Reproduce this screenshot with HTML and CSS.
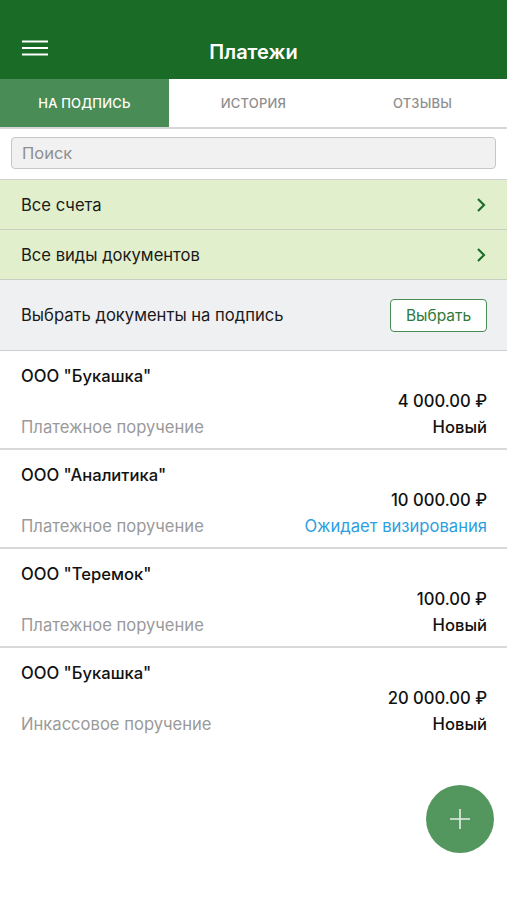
FILE: index.html
```html
<!DOCTYPE html>
<html lang="ru">
<head>
  <meta charset="UTF-8">
  <meta name="viewport" content="width=device-width, initial-scale=1.0">
  <title>Платежи</title>
  <link rel="stylesheet" href="styles.css">
</head>
<body>
  <div id="app">
    <header class="topbar">
      <button class="menu-btn" aria-label="Меню">
        <svg width="26" height="16" viewBox="0 0 26 16">
          <path d="M0 1.5H26M0 8H26M0 14.5H26" stroke="#fff" stroke-width="2.2" fill="none"/>
        </svg>
      </button>
      <h1 class="title">Платежи</h1>
    </header>

    <nav class="tabs">
      <div class="tab active">На подпись</div>
      <div class="tab">История</div>
      <div class="tab">Отзывы</div>
    </nav>

    <div class="search-wrap">
      <input class="search" type="text" placeholder="Поиск">
    </div>

    <div class="filter">
      <span>Все счета</span>
      <svg class="chevron" width="10" height="16" viewBox="0 0 10 16">
        <path d="M2 2L8 8L2 14" stroke="#1f6e2b" stroke-width="2.2" fill="none"/>
      </svg>
    </div>
    <div class="filter">
      <span>Все виды документов</span>
      <svg class="chevron" width="10" height="16" viewBox="0 0 10 16">
        <path d="M2 2L8 8L2 14" stroke="#1f6e2b" stroke-width="2.2" fill="none"/>
      </svg>
    </div>

    <div class="select-row">
      <span>Выбрать документы на подпись</span>
      <button class="select-btn">Выбрать</button>
    </div>

    <ul class="docs">
      <li class="doc">
        <div class="doc-name">ООО "Букашка"</div>
        <div class="doc-amount">4 000.00 ₽</div>
        <div class="doc-bottom">
          <span class="doc-type">Платежное поручение</span>
          <span class="doc-status">Новый</span>
        </div>
      </li>
      <li class="doc">
        <div class="doc-name">ООО "Аналитика"</div>
        <div class="doc-amount">10 000.00 ₽</div>
        <div class="doc-bottom">
          <span class="doc-type">Платежное поручение</span>
          <span class="doc-status waiting">Ожидает визирования</span>
        </div>
      </li>
      <li class="doc">
        <div class="doc-name">ООО "Теремок"</div>
        <div class="doc-amount">100.00 ₽</div>
        <div class="doc-bottom">
          <span class="doc-type">Платежное поручение</span>
          <span class="doc-status">Новый</span>
        </div>
      </li>
      <li class="doc last">
        <div class="doc-name">ООО "Букашка"</div>
        <div class="doc-amount">20 000.00 ₽</div>
        <div class="doc-bottom">
          <span class="doc-type">Инкассовое поручение</span>
          <span class="doc-status">Новый</span>
        </div>
      </li>
    </ul>

    <button class="fab" aria-label="Добавить">
      <svg width="20" height="20" viewBox="0 0 20 20">
        <path d="M10 0V20M0 10H20" stroke="#e6f0e7" stroke-width="1.6" fill="none"/>
      </svg>
    </button>
  </div>
</body>
</html>
```

FILE: styles.css
```css
body {
  margin: 0;
  font-family: Inter, "Noto Sans", Arial, sans-serif;
  background-color: #fff;
  color: #111;
}

#app {
  position: relative;
  width: 507px;
  height: 900px;
  overflow: hidden;
}

/* Header */
.topbar {
  height: 79px;
  background-color: #1a6b25;
  display: flex;
  align-items: flex-end;
  box-sizing: border-box;
  padding: 0 0 18px 22px;
  position: relative;
}

.menu-btn {
  background: none;
  border: none;
  padding: 0;
  width: 26px;
  height: 16px;
  margin-bottom: 5px;
}

.menu-btn svg {
  display: block;
}

.title {
  position: absolute;
  left: 0;
  right: 0;
  bottom: 15px;
  margin: 0;
  text-align: center;
  color: #fff;
  font-size: 20px;
  font-weight: 600;
  pointer-events: none;
}

/* Tabs */
.tabs {
  display: flex;
  height: 48px;
  border-bottom: 2px solid #d6d6d6;
}

.tab {
  flex: 1;
  display: flex;
  align-items: center;
  justify-content: center;
  font-size: 13px;
  font-weight: 500;
  text-transform: uppercase;
  color: #8e8e8e;
  letter-spacing: 0.2px;
}

.tab.active {
  background-color: #4a8c55;
  color: #fff;
}

/* Search */
.search-wrap {
  padding: 8px 11px 10px;
  border-bottom: 1px solid #cfcfcf;
}

.search {
  display: block;
  width: 100%;
  box-sizing: border-box;
  height: 32px;
  padding: 0 10px;
  border: 1px solid #c6c6c6;
  border-radius: 4px;
  background-color: #f1f1f1;
  font-family: inherit;
  font-size: 16.5px;
  color: #111;
}

.search::placeholder {
  color: #8f8f8f;
}

/* Filters */
.filter {
  display: flex;
  align-items: center;
  justify-content: space-between;
  height: 49px;
  padding: 0 21px;
  background-color: #e2efcc;
  border-bottom: 1px solid #c9cec2;
  font-size: 16.6px;
  color: #1a1a1a;
}

.select-row {
  display: flex;
  align-items: center;
  justify-content: space-between;
  height: 70px;
  padding: 0 20px 0 21px;
  background-color: #eff0f2;
  border-bottom: 1px solid #cfcfcf;
  font-size: 16.6px;
  color: #1a1a1a;
}

.select-btn {
  width: 97px;
  height: 33px;
  border: 1.5px solid #4a8c55;
  border-radius: 4px;
  background-color: #fff;
  color: #2e7a3a;
  font-family: inherit;
  font-size: 15.5px;
}

/* Documents */
.docs {
  list-style: none;
  margin: 0;
  padding: 0;
}

.doc {
  height: 97px;
  padding: 0 20px 0 21px;
  border-bottom: 2px solid #d9d9d9;
}

.doc.last {
  border-bottom: none;
}

.doc-name {
  padding-top: 14px;
  font-size: 16.6px;
  font-weight: 500;
  line-height: 22px;
}

.doc-amount {
  text-align: right;
  font-size: 16.6px;
  font-weight: 500;
  line-height: 22px;
  margin-top: 3px;
}

.doc-bottom {
  display: flex;
  justify-content: space-between;
  font-size: 16.6px;
  line-height: 22px;
  margin-top: 4px;
}

.doc-type {
  color: #9a9a9a;
}

.doc-status {
  font-weight: 500;
}

.doc-status.waiting {
  color: #2d9fe0;
  font-weight: 400;
}

/* Floating button */
.fab {
  position: absolute;
  left: 426px;
  top: 785px;
  width: 68px;
  height: 68px;
  border-radius: 50%;
  border: none;
  background-color: #53975f;
  display: flex;
  align-items: center;
  justify-content: center;
  padding: 0;
}
```
